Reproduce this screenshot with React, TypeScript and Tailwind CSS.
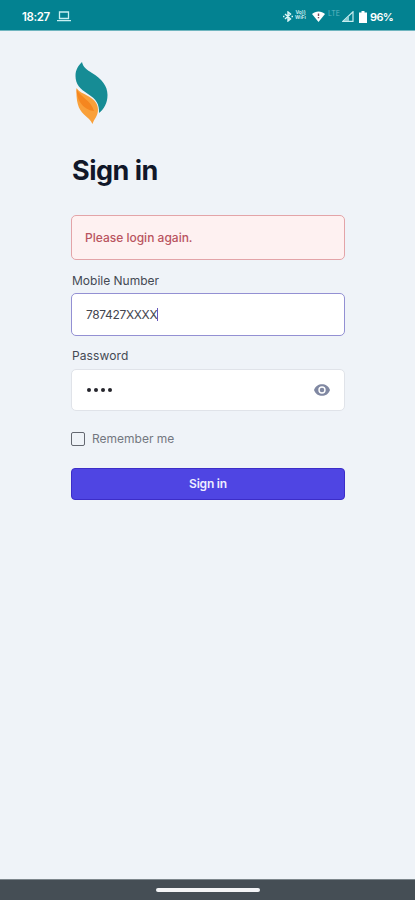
import React from 'react';

function Logo() {
  return (
    <svg className="block h-[64px] w-[34px]" viewBox="0 0 34 64" fill="none">
      <path d="M8 1C9 6 13 9 18 12C28 18 33.5 25 33.5 34C33.5 42 30 48 25 52C25.500 43 22 38 14 33C6 28 1.500 23 1.500 15C1.500 9 4 5 8 1Z" fill="#168C95" />
      <path d="M2.500 27C5 31 9 32 14 35C21 39 24 43 24 49C24 55 20 58 18.500 63C16.500 59 14 57 10 53.500C4 48 2 40 2.500 27Z" fill="#F9A03A" />
      <path d="M2.500 28C6 36 17 39 20 50C12 49 3 43 2.500 28Z" fill="#F5861F" />
    </svg>
  );
}

function StatusBar() {
  return (
    <header className="flex h-[31px] shrink-0 items-center border-b border-[#6fb5bf] bg-[#038291] pt-[3px] pr-[23px] pl-[22px] text-white">
      <span className="w-[28px] whitespace-nowrap text-[11.5px] leading-4 font-semibold tracking-[-0.4px]">18:27</span>
      {/* Laptop */}
      <svg className="ml-[7px] h-[11px] w-[14px]" viewBox="0 0 14 11" fill="none" stroke="#c8f0f2" strokeWidth="1.3">
        <path d="M2.5 1h9v6.5h-9zM0 9.7h14" />
      </svg>
      <div className="ml-auto flex items-center">
        {/* Bluetooth */}
        <svg className="h-[11px] w-[10px]" viewBox="0 0 10 11" fill="none" stroke="#e0f7f8" strokeWidth="1.4">
          <path d="M2 3l5.5 5L5 10V1l2.5 2L2 8M0 5.5h1.5M8.5 5.5H10" />
        </svg>
        <span className="mb-[4px] ml-[2px] w-[11px] text-center text-[5px] leading-[5px] font-bold text-[#c3e9ec]">
          Vo))
          <br />
          WiFi
        </span>
        {/* Wifi */}
        <svg className="ml-[6px] h-[11px] w-[13px]" viewBox="0 0 13 11">
          <path d="M0 3C3.5 -.5 9.5 -.5 13 3L6.5 11z" fill="#fff" />
          <path d="M6.5 2.5v2.5M6.5 6v1.3" stroke="#7a4a5a" strokeWidth="1.4" />
        </svg>
        <span className="mb-[6px] ml-[3px] w-[13px] text-[7px] leading-[8px] text-[#62b6c1]">LTE</span>
        {/* Signal */}
        <svg className="ml-[1px] h-[11px] w-[12px]" viewBox="0 0 12 11">
          <path d="M1 10.3L11 .8v9.5z" fill="none" stroke="#c8edef" strokeWidth="1.2" />
          <path d="M2 10L7 5v5z" fill="#8fced3" />
        </svg>
        {/* Battery */}
        <svg className="ml-[5px] h-[12px] w-[8px]" viewBox="0 0 8 12" fill="#fff">
          <path d="M2.5 0h3v1.5H8V12H0V1.5h2.5z" />
        </svg>
        <span className="ml-[3px] w-[22px] whitespace-nowrap text-[11px] leading-4 font-semibold tracking-[-0.6px]">96%</span>
      </div>
    </header>
  );
}

export default function App() {
  return (
    <div className="flex h-[900px] w-full flex-col bg-[#EFF3F8] font-['Inter','Liberation_Sans',sans-serif]">
      <StatusBar />

      <main className="flex-1 pt-[30px] pr-[70px] pl-[71px]">
        <div className="pl-[3px]">
          <Logo />
        </div>

        <h1 className="mt-[28px] h-[36px] whitespace-nowrap pl-px text-[27px] leading-[36px] font-bold tracking-[-0.5px] text-[#111729]">Sign in</h1>

        {/* Alert */}
        <div className="mt-[26px] flex h-[45px] items-center rounded-[5px] border border-[#E3A4A8] bg-[#FEF1F1] px-[13px] text-[12px] font-medium text-[#B95460]">
          Please login again.
        </div>

        {/* Mobile number */}
        <label className="mt-[13px] block h-[16px] pl-px text-[12px] leading-[16px] text-[#444953]">Mobile Number</label>
        <div className="mt-[4px] flex h-[43px] items-center rounded-[5px] border border-[#9390D3] bg-white pl-[14px] text-[12px] text-[#44464f]">
          <span className="tracking-[-0.35px]">787427XXXX</span>
          <span className="h-[13px] w-px bg-[#6657BC]" />
        </div>

        {/* Password */}
        <label className="mt-[12px] block h-[16px] pl-px text-[12px] leading-[16px] tracking-[0.1px] text-[#444953]">Password</label>
        <div className="mt-[5px] flex h-[42px] items-center justify-between rounded-[5px] border border-[#E0E3E9] bg-white pr-[14px] pl-[15px]">
          <div className="flex gap-[3px]">
            <span className="size-[4px] rounded-full bg-[#25252c]" />
            <span className="size-[4px] rounded-full bg-[#25252c]" />
            <span className="size-[4px] rounded-full bg-[#25252c]" />
            <span className="size-[4px] rounded-full bg-[#25252c]" />
          </div>
          <svg className="h-[12px] w-[16px]" viewBox="0 0 16 12">
            <path d="M0 6C2.5 -1.8 13.5 -1.8 16 6C13.5 13.8 2.5 13.8 0 6z" fill="#8088A2" />
            <circle cx="8" cy="6" r="3" fill="none" stroke="#fff" strokeWidth="1.4" />
          </svg>
        </div>

        {/* Remember me */}
        <label className="mt-[20px] flex h-[16px] items-center text-[12px] leading-[16px] text-[#737780]">
          <span className="mr-[7px] size-[14px] rounded-[2px] border border-[#646871]" />
          Remember me
        </label>

        <button className="mt-[21px] flex h-[32px] w-full items-center justify-center rounded-[4px] border border-[#3C2DC8] bg-[#4F45E3] text-[12px] font-semibold tracking-[-0.2px] text-[#EEEDFF]">
          Sign in
        </button>
      </main>

      {/* Gesture bar */}
      <footer className="flex h-[21px] shrink-0 justify-center border-t border-[#7d868c] bg-[#454E55] pt-[8px]">
        <div className="h-[4px] w-[104px] rounded-full bg-[#F4F5F7]" />
      </footer>
    </div>
  );
}
